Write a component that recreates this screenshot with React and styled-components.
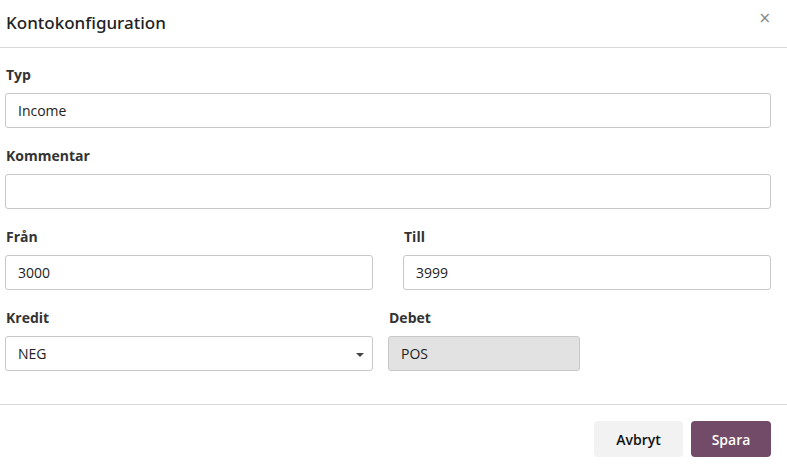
import React from "react";
import styled, { createGlobalStyle } from "styled-components";

const Global = createGlobalStyle`
  html, body { margin: 0; padding: 0; background: #fff; }
  body { font-family: "Open Sans", "Noto Sans", sans-serif; color: #212529; }
  * { box-sizing: border-box; }
`;

const Modal = styled.div`
  width: 787px;
  height: 468px;
  display: flex;
  flex-direction: column;
  background: #fff;
`;

const Header = styled.div`
  height: 48px;
  display: flex;
  align-items: center;
  justify-content: space-between;
  padding: 0 16px 2px 6px;
  border-bottom: 1px solid #d8d8d8;
`;

const Title = styled.h4`
  margin: 0;
  font-family: "Noto Sans", sans-serif;
  font-size: 17px;
  font-weight: 500;
  color: #222;
`;

const Close = styled.button`
  border: 0;
  background: none;
  padding: 0;
  margin-top: -8px;
  color: #888;
  font-size: 15px;
  line-height: 1;
  cursor: pointer;
  font-family: "DejaVu Sans", sans-serif;
`;

const Body = styled.div`
  padding: 18px 16px 0 5px;
  display: flex;
  flex-direction: column;
  height: 357px;
  border-bottom: 1px solid #d8d8d8;
`;

const Row = styled.div`
  display: grid;
  grid-template-columns: ${(p) => p.$cols || "1fr"};
  column-gap: ${(p) => p.$gap || "0px"};
  margin-bottom: 19px;
`;

const Field = styled.div`
  display: flex;
  flex-direction: column;
`;

const Label = styled.label`
  font-family: "Open Sans", sans-serif;
  font-weight: 700;
  font-size: 14px;
  color: #333;
  height: 17px;
  line-height: 17px;
  margin-bottom: 10px;
  padding-left: 1px;
`;

const Input = styled.div`
  position: relative;
  height: 35px;
  border: 1px solid #c8c8c8;
  border-radius: 3px;
  background: ${(p) => (p.$readonly ? "#e2e2e2" : "#fff")};
  display: flex;
  align-items: center;
  padding: 0 12px;
  font-size: 14px;
  color: #222;
`;

const Caret = styled.span`
  position: absolute;
  right: 8px;
  top: 16px;
  width: 0;
  height: 0;
  border-left: 4px solid transparent;
  border-right: 4px solid transparent;
  border-top: 4px solid #444;
`;

const Footer = styled.div`
  flex: 1;
  display: flex;
  justify-content: flex-end;
  align-items: flex-start;
  gap: 8px;
  padding: 16px 16px 0 0;
`;

const Button = styled.button`
  height: 36px;
  padding: 0;
  border: 0;
  border-radius: 4px;
  font-family: "Open Sans", sans-serif;
  font-weight: 600;
  font-size: 14px;
  background: ${(p) => (p.$primary ? "#714b67" : "#f2f2f2")};
  color: ${(p) => (p.$primary ? "#fff" : "#111")};
  width: ${(p) => p.$width};
`;

export default function App() {
  return (
    <>
      <Global />
      <Modal>
        <Header>
          <Title>Kontokonfiguration</Title>
          <Close aria-label="Stäng">×</Close>
        </Header>
        <Body>
          <Row>
            <Field>
              <Label>Typ</Label>
              <Input>Income</Input>
            </Field>
          </Row>
          <Row>
            <Field>
              <Label>Kommentar</Label>
              <Input />
            </Field>
          </Row>
          <Row $cols="1fr 1fr" $gap="30px">
            <Field>
              <Label>Från</Label>
              <Input>3000</Input>
            </Field>
            <Field>
              <Label>Till</Label>
              <Input>3999</Input>
            </Field>
          </Row>
          <Row $cols="368px 192px" $gap="15px">
            <Field>
              <Label>Kredit</Label>
              <Input>
                NEG
                <Caret />
              </Input>
            </Field>
            <Field>
              <Label>Debet</Label>
              <Input $readonly>POS</Input>
            </Field>
          </Row>
        </Body>
        <Footer>
          <Button $width="89px">Avbryt</Button>
          <Button $primary $width="80px">Spara</Button>
        </Footer>
      </Modal>
    </>
  );
}
